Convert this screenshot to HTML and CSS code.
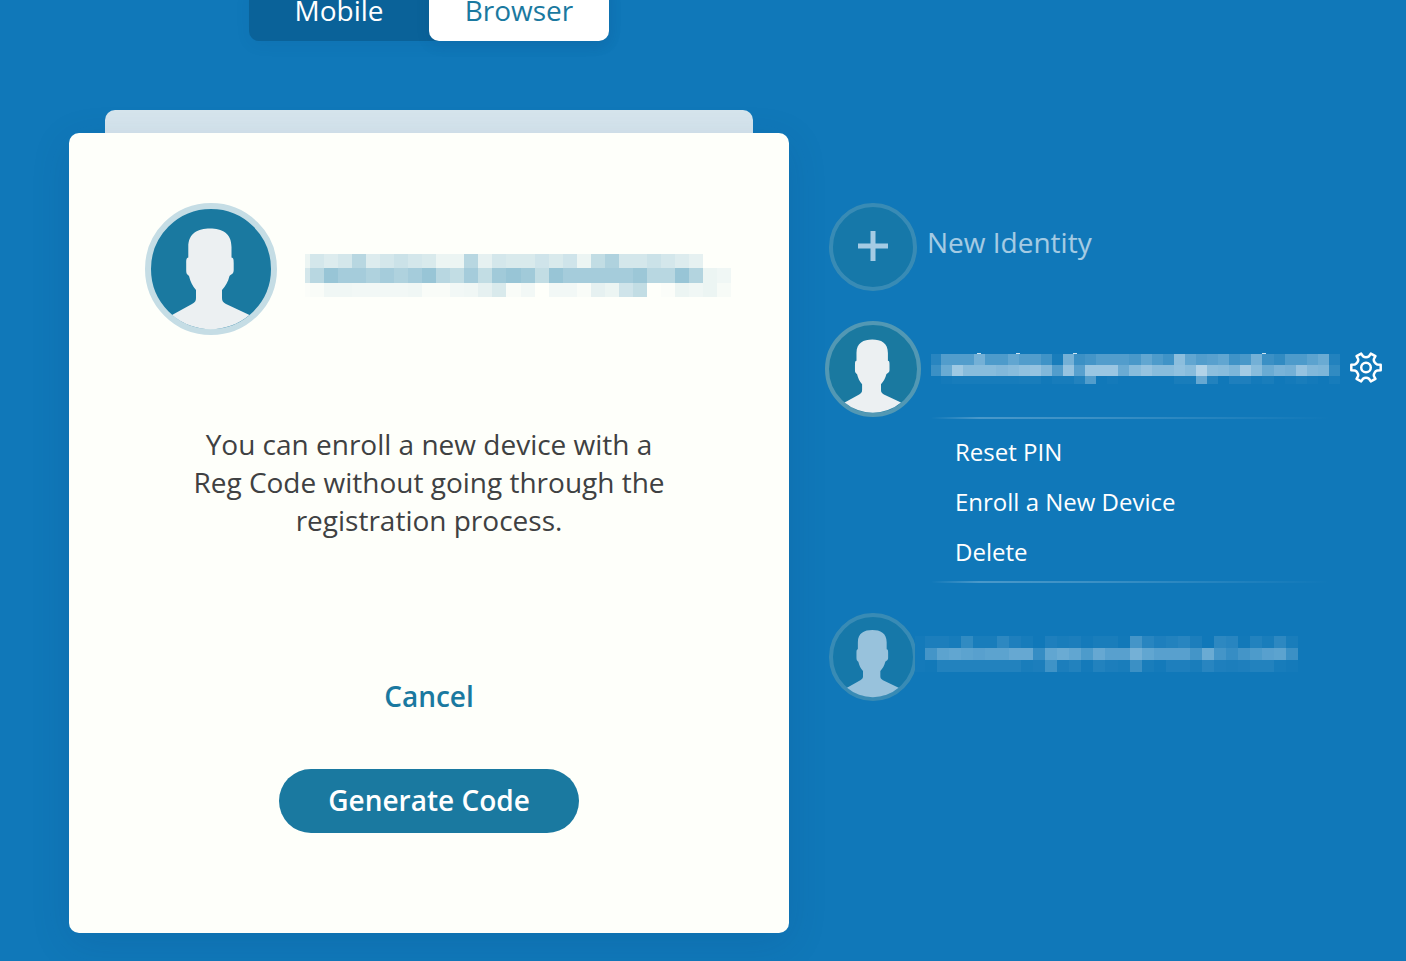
FILE: index.html
```html
<!DOCTYPE html>
<html lang="en">
<head>
<meta charset="utf-8">
<title>Enroll a New Device</title>
<link rel="stylesheet" href="styles.css">
</head>
<body>
<svg class="defs" aria-hidden="true">
  <symbol id="person" viewBox="0 0 132 132">
    <path d="M65 25.500C77 25.500 86.500 30 86.500 44V54.500C88.500 55 88.700 56 88.700 60V67C88.700 71 86.500 71 84.500 73C83 79 80.500 83 77 87V95C77 98 78 99 81 101L104.500 112A60 60 0 0 1 27 112L47 101C50 99 51 98 51 95V87C47.500 83 45.500 79 44 73C42 71 41.200 71 41.200 67V60C41.200 56 41.500 55 43.300 54.500V44C43.300 30 53 25.500 65 25.500Z"/>
  </symbol>
</svg>
<main class="page">
  <section class="device">
    <div class="toggle">
      <button class="toggle-option" type="button">Mobile</button>
      <button class="toggle-option selected" type="button">Browser</button>
    </div>
    <div class="card-behind"></div>
    <div class="card">
      <header class="card-header">
        <span class="avatar large"><svg><use href="#person"/></svg></span>
        <svg class="masked dark" data-name="card" width="426" height="43" viewBox="0 0 426 43" role="img" aria-label="Hidden identity"></svg>
      </header>
      <p class="message">You can enroll a new device with a Reg Code without going through the registration process.</p>
      <button class="cancel" type="button">Cancel</button>
      <button class="generate" type="button">Generate Code</button>
    </div>
  </section>
  <aside class="identities">
    <button class="identity faded" type="button">
      <span class="avatar small"><svg class="plus" viewBox="0 0 30 30"><path d="M15 0V30M0 15H30"/></svg></span>
      <span class="identity-label">New Identity</span>
    </button>
    <div class="identity">
      <span class="avatar medium"><svg><use href="#person"/></svg></span>
      <svg class="masked active" data-name="active" width="409" height="32" viewBox="0 -2 409 32" role="img" aria-label="Hidden identity"></svg>
      <button class="settings" type="button" aria-label="Identity settings">
        <svg width="32" height="32" viewBox="0 0 32 32"><path d="M1.300 12.800L4.800 12.500Q6.500 12 7.500 10.200Q8.500 8.500 8.100 7L6.600 4.200L11.200 1.600L13 4.200Q14.300 5.300 16 5.300Q17.700 5.300 19 4.200L20.800 1.600L25.400 4.200L23.900 7Q23.500 8.500 24.500 10.200Q25.500 12 27.200 12.500L30.700 12.800V18.200L27.200 18.500Q25.500 19 24.500 20.800Q23.500 22.500 23.900 24L25.400 26.800L20.800 29.400L19 26.800Q17.700 25.700 16 25.700Q14.300 25.700 13 26.800L11.200 29.400L6.600 26.800L8.100 24Q8.500 22.500 7.500 20.800Q6.500 19 4.800 18.500L1.300 18.200Z"/><circle cx="16" cy="15.500" r="4.800"/></svg>
      </button>
    </div>
    <div class="menu">
      <button class="menu-item" type="button">Reset PIN</button>
      <button class="menu-item" type="button">Enroll a New Device</button>
      <button class="menu-item" type="button">Delete</button>
    </div>
    <div class="identity last">
      <span class="avatar small faded"><svg><use href="#person"/></svg></span>
      <svg class="masked overlap" data-name="other" width="383" height="36" viewBox="0 0 383 36" role="img" aria-label="Hidden identity"></svg>
    </div>
  </aside>
</main>
<script src="masks.js"></script>
</body>
</html>
```

FILE: styles.css
```css
* { box-sizing: border-box; }

body {
  margin: 0;
  min-height: 100vh;
  background: #1078b9;
  color: #fff;
  font-family: "Open Sans", "Noto Sans", sans-serif;
  font-size: 28px;
  line-height: 38px;
  overflow: hidden;
}

button {
  margin: 0;
  padding: 0;
  border: 0;
  background: none;
  color: inherit;
  font: inherit;
  cursor: pointer;
}

svg { display: block; flex: none; }
.defs { position: absolute; width: 0; height: 0; }

.page {
  display: grid;
  grid-template-columns: minmax(0, 720px) minmax(0, 1fr);
  column-gap: 36px;
  padding: 0 25px 28px 69px;
}

.device { display: flex; flex-direction: column; align-items: center; }

.toggle {
  display: flex;
  width: 50%;
  height: 62px;
  margin-top: -21px;
  border-radius: 10px;
  background: #0a6299;
  box-shadow: 0 4px 16px rgba(0, 50, 100, .06);
}
.toggle-option { flex: 1; }
.toggle-option.selected {
  border-radius: 10px;
  background: #fff;
  color: #1a79a0;
  box-shadow: 0 4px 14px rgba(0, 50, 100, .1);
}

.card-behind {
  width: 90%;
  height: 23px;
  margin-top: 69px;
  border-radius: 10px 10px 0 0;
  background: #d6e5ed;
}

.card {
  display: flex;
  flex-direction: column;
  align-items: center;
  width: 100%;
  padding: 70px 56px 100px 76px;
  border-radius: 10px;
  background: #fefffa;
  box-shadow: 0 10px 40px rgba(0, 50, 100, .12);
}
.card-header { display: flex; align-items: center; gap: 28px; width: 100%; }

.message {
  width: 480px;
  max-width: 100%;
  margin: 90px 20px 0 0;
  color: #3f4142;
  text-align: center;
}
.cancel {
  margin: 138px 20px 0 0;
  color: #1a79a0;
  font-weight: 600;
}
.generate {
  width: 300px;
  height: 64px;
  margin: 54px 20px 0 0;
  padding-bottom: 2px;
  border-radius: 32px;
  background: #1a79a0;
  color: #fff;
  font-weight: 600;
}

.avatar {
  display: grid;
  place-items: center;
  flex: none;
  border: 4px solid #5298b4;
  border-radius: 50%;
  background: #1a79a0;
}
.avatar svg { margin: -4px; fill: #ecf0f2; }
.avatar.large { width: 132px; height: 132px; border: 6px solid #c5dde5; }
.avatar.large svg { width: 132px; height: 132px; margin: -6px; }
.avatar.medium { width: 96px; height: 96px; }
.avatar.medium svg { width: 96px; height: 96px; }
.avatar.small { width: 88px; height: 88px; margin: 0 4px; }
.avatar.small svg { width: 88px; height: 88px; }
.avatar.small .plus {
  width: 30px;
  height: 30px;
  margin: 0 0 2px;
  stroke: #fff;
  stroke-width: 5;
}
.faded { opacity: .62; }

.masked { fill: #fff; }
.masked.dark { margin-top: 12px; fill: #167aa8; }
.masked.active { margin-bottom: 2px; }
.masked.overlap { z-index: 1; margin: -6px 0 0 -16px; background: #1078b9; }

.identities { padding-top: 203px; }
.identity { display: flex; align-items: center; gap: 10px; }
.identity-label { margin: 0 0 10px -4px; }
.identities > .identity + .identity { margin-top: 30px; }
.identities > .last { margin-top: 30px; }

.settings { margin: 0 0 2px auto; }
.settings svg { fill: none; stroke: #fff; stroke-width: 2.5; stroke-linejoin: round; }

.menu {
  display: flex;
  flex-direction: column;
  align-items: flex-start;
  gap: 12px;
  max-width: 400px;
  margin-left: 106px;
  padding: 14px 24px 10px;
  border: solid transparent;
  border-width: 2px 0;
  border-image: linear-gradient(90deg, transparent, rgba(255, 255, 255, .24) 12%, rgba(255, 255, 255, .18) 40%, transparent) 2 0;
  font-size: 24px;
}
.menu-item { white-space: nowrap; }
```

FILE: masks.js
```js
// Opacity of each tile, in percent. The first tile of a row is a partial one.
const masks = {
  card: {
    first: 5, tile: 421 / 30, tops: [0, 14, 29, 43],
    rows: [
      [8,18,14,18,30,14,18,22,18,16,8,8,30,10,18,16,16,20,16,20,8,26,34,18,18,22,18,14,10,0,0],
      [18,30,44,38,38,34,38,34,38,44,30,26,38,26,40,44,40,26,44,38,38,38,38,38,42,30,30,44,32,8,6],
      [1,2,6,6,5,5,5,5,6,2,2,5,6,10,16,2,5,0,5,5,2,10,8,20,26,0,1,8,6,8,3]
    ]
  },
  active: {
    first: 10, tile: 399 / 36, tops: [0, 11, 22, 30],
    rows: [
      [10,28,28,28,42,26,26,34,28,28,20,4,42,18,22,28,28,28,24,34,26,20,52,34,28,30,34,20,24,42,18,14,26,26,32,38,8],
      [18,38,60,50,50,50,48,50,54,56,48,28,56,30,58,58,58,38,50,56,50,50,54,50,68,52,50,46,62,50,38,44,42,56,48,46,14],
      [0,2,3,3,3,3,3,3,4,4,1,3,3,8,28,0,2,0,0,0,0,0,4,4,36,8,0,6,6,2,4,0,2,4,2,0,3]
    ],
    dots: [46, 85, 142, 331]
  },
  other: {
    first: 10, tile: 373 / 31, tops: [0, 12, 24, 36],
    rows: [
      [2,5,5,3,14,4,4,12,6,3,0,6,4,5,2,4,4,1,22,10,6,8,10,5,0,12,10,1,8,4,12,4],
      [2,22,32,34,32,30,32,32,36,36,16,34,38,34,26,36,30,30,42,34,30,30,30,22,38,22,16,22,26,30,32,18],
      [2,1,8,8,8,8,8,8,8,4,5,20,5,8,2,8,5,4,18,4,2,6,6,4,10,6,5,6,8,8,3,2]
    ]
  }
};

function addRect(svg, x, y, width, height, opacity) {
  const rect = document.createElementNS("http://www.w3.org/2000/svg", "rect");
  const values = { x, y, width, height, "fill-opacity": opacity };
  for (const key in values) rect.setAttribute(key, values[key]);
  svg.append(rect);
}

document.querySelectorAll(".masked").forEach((svg) => {
  const mask = masks[svg.dataset.name];
  mask.rows.forEach((row, r) => {
    const edge = (i) => (i === 0 ? 0 : Math.round(mask.first + (i - 1) * mask.tile));
    row.forEach((percent, i) => {
      addRect(svg, edge(i), mask.tops[r], edge(i + 1) - edge(i), mask.tops[r + 1] - mask.tops[r], percent / 100);
    });
  });
  (mask.dots || []).forEach((x) => addRect(svg, x, -1, 4, 1, 0.8));
});
```
